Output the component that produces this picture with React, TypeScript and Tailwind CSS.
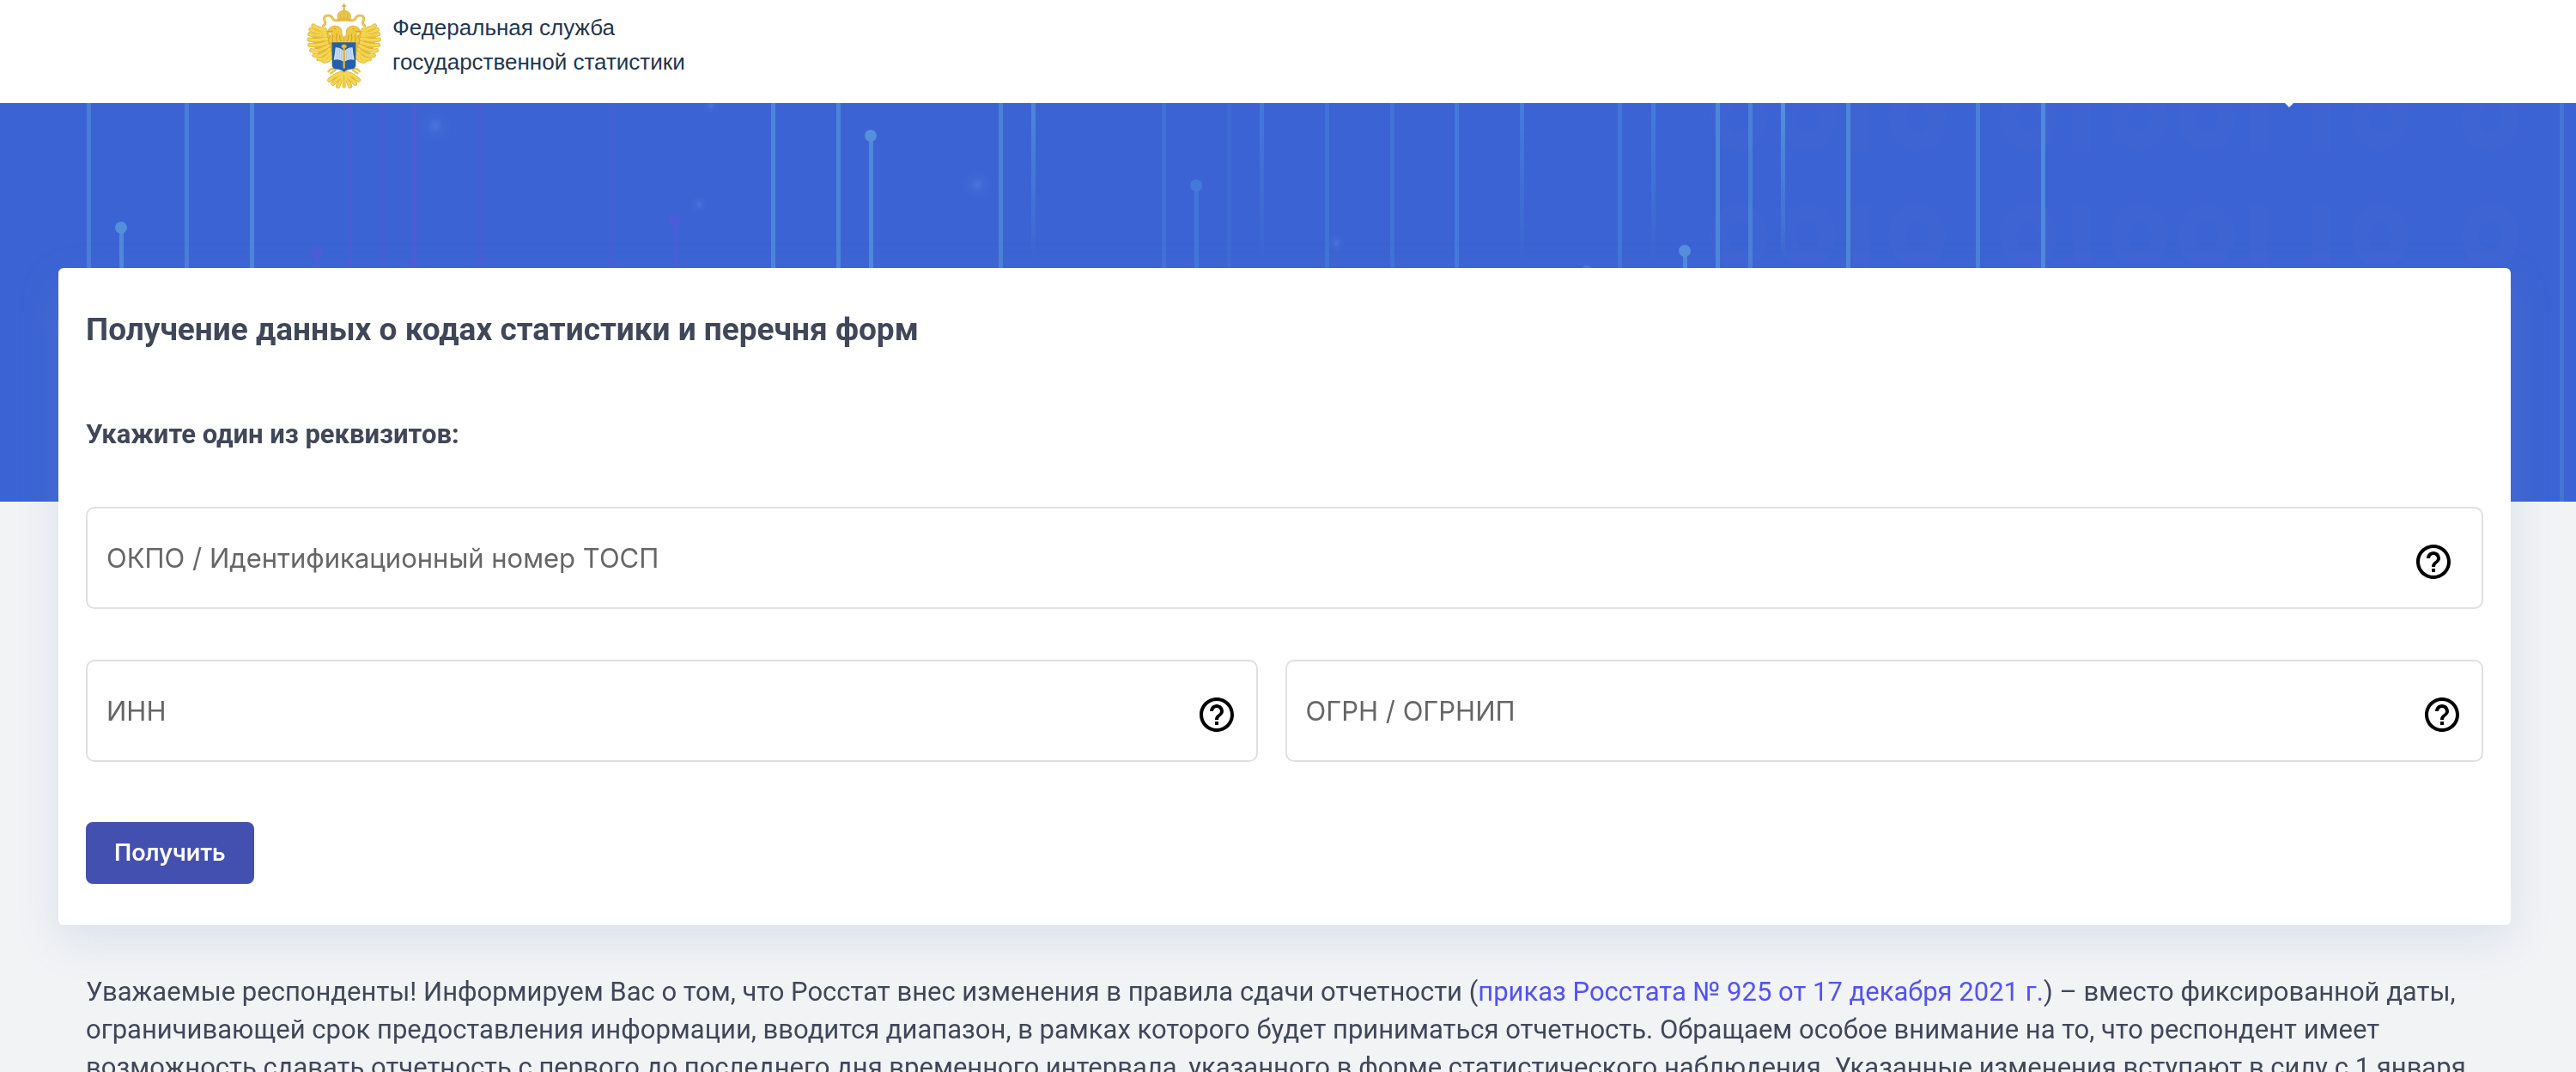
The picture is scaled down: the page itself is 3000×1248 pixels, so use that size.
import React from "react";
import { MdHelpOutline } from "react-icons/md";

// light lines of the banner, "fade" is where the line dissolves
const lines = [
  { x: 103, color: "#5596dd", o: 0.55 },
  { x: 217, color: "#5596dd", o: 0.55 },
  { x: 293, color: "#5596dd", o: 0.7 },
  { x: 407, color: "#5558d8", o: 0.5 },
  { x: 445, color: "#5558d8", o: 0.35 },
  { x: 482, color: "#5558d8", o: 0.6 },
  { x: 559, color: "#5558d8", o: 0.4 },
  { x: 711, color: "#5558d8", o: 0.35 },
  { x: 900, color: "#5596dd", o: 0.65 },
  { x: 976, color: "#5596dd", o: 0.65 },
  { x: 1165, color: "#5596dd", o: 0.6 },
  { x: 1203, color: "#5596dd", o: 0.7, fade: true },
  { x: 1355, color: "#457fdd", o: 0.5 },
  { x: 1431, color: "#457fdd", o: 0.25 },
  { x: 1469, color: "#457fdd", o: 0.8, fade: true },
  { x: 1545, color: "#457fdd", o: 0.6 },
  { x: 1621, color: "#457fdd", o: 0.5 },
  { x: 1696, color: "#457fdd", o: 0.8 },
  { x: 1772, color: "#457fdd", o: 0.9, fade: true },
  { x: 1886, color: "#457fdd", o: 0.7 },
  { x: 1925, color: "#457fdd", o: 0.9, fade: true },
  { x: 2000, color: "#5596dd", o: 0.7 },
  { x: 2038, color: "#5596dd", o: 0.55 },
  { x: 2076, color: "#5596dd", o: 0.9, fade: true },
  { x: 2152, color: "#5596dd", o: 0.7 },
  { x: 2303, color: "#5596dd", o: 0.6 },
  { x: 2379, color: "#5596dd", o: 0.75 },
  { x: 2983, color: "#5596dd", o: 0.35 },
];

const dots = [
  { x: 141, y: 145, color: "#548fdc" },
  { x: 369, y: 174, color: "#4a5dd8" },
  { x: 786, y: 137, color: "#4a5dd8" },
  { x: 1014, y: 38, color: "#548fdc" },
  { x: 1393, y: 96, color: "#427ada" },
  { x: 1848, y: 196, color: "#427ada" },
  { x: 1962, y: 172, color: "#548fdc" },
];

const glows = [
  { x: 507, y: 26, r: 22 },
  { x: 828, y: 3, r: 12 },
  { x: 814, y: 118, r: 12 },
  { x: 1138, y: 95, r: 20 },
  { x: 1556, y: 163, r: 12 },
];

const zeros = [2025, 2105, 2233, 2362, 2492, 2570, 2772, 2900];
const ones = [2156, 2413, 2619, 2692];

// feathers of one wing, from the shoulder to the tip
const feathers = [
  "M116 104 Q90 100 76 90",
  "M118 114 Q86 114 67 103",
  "M120 124 Q84 128 63 119",
  "M122 136 Q86 144 61 138",
  "M124 148 Q90 162 63 157",
  "M128 160 Q94 182 69 176",
  "M132 172 Q102 200 79 193",
  "M136 184 Q112 212 94 206",
  "M140 196 Q126 216 112 213",
];

function HalfEagle() {
  return (
    <g>
      <path d="M112 96 Q76 100 72 130 Q72 176 110 200 L150 210 L150 140 Z" fill="#e9c13b" />
      {feathers.map((d) => (
        <path key={d} d={d} stroke="#dcae34" strokeWidth="15" />
      ))}
      {feathers.map((d) => (
        <path key={d} d={d} stroke="#f5d650" strokeWidth="11" />
      ))}
      <path
        d="M108 112 Q90 112 78 104 M110 126 Q90 130 74 124 M112 142 Q92 150 74 146 M118 158 Q100 172 82 170 M126 174 Q110 190 94 190"
        stroke="#dfb63c"
        strokeWidth="2"
      />
      {/* ribbon */}
      <path
        d="M166 70 Q148 76 142 62 Q134 50 118 56 Q110 66 117 76 Q120 86 110 90"
        stroke="#d2a23a"
        strokeWidth="8"
      />
      <path
        d="M166 70 Q148 76 142 62 Q134 50 118 56 Q110 66 117 76 Q120 86 110 90"
        stroke="#f0cf52"
        strokeWidth="5"
      />
      {/* neck and head */}
      <path
        d="M182 150 L130 150 Q126 130 142 116 L124 113 Q128 94 150 90 Q172 92 175 108 Q172 122 182 130 Z"
        fill="#f0c940"
        stroke="#d0a034"
        strokeWidth="2"
      />
      <path
        d="M126 110 L144 108 M144 124 Q140 134 144 144 M158 118 Q152 132 158 144 M168 124 Q166 134 172 144"
        stroke="#cd9c30"
        strokeWidth="3"
      />
      <circle cx="151" cy="101" r="2" fill="#a67820" />
      {/* leg and tail */}
      <path d="M148 240 Q134 240 128 250 M152 246 L136 256" stroke="#ecc544" strokeWidth="7" />
      <path
        d="M172 256 Q150 262 132 280 M174 260 Q158 276 144 292 M178 262 Q170 282 162 301"
        stroke="#d9aa34"
        strokeWidth="15"
      />
      <path
        d="M172 256 Q150 262 132 280 M174 260 Q158 276 144 292 M178 262 Q170 282 162 301"
        stroke="#f5d650"
        strokeWidth="11"
      />
      <path d="M164 268 Q148 274 138 284 M172 274 Q162 286 156 296" stroke="#dcb03a" strokeWidth="2" />
    </g>
  );
}

function Emblem() {
  return (
    <svg
      viewBox="46 0 276 312"
      className="h-[104px] w-[92px] shrink-0"
      fill="none"
      strokeLinecap="round"
      aria-hidden="true"
    >
      <HalfEagle />
      <g transform="translate(366 0) scale(-1 1)">
        <HalfEagle />
      </g>
      <path d="M183 256 V302" stroke="#f5d650" strokeWidth="14" />
      <path d="M183 264 V304" stroke="#d5a834" strokeWidth="2" />
      {/* crown */}
      <path d="M183 14 V36 M177 21 H189" stroke="#d9ac3c" strokeWidth="5" />
      <path
        d="M163 72 Q154 50 168 42 Q183 32 198 42 Q212 50 203 72 Z"
        fill="#efc945"
        stroke="#cf9d38"
        strokeWidth="2"
      />
      <path
        d="M164 66 H202 M183 38 V62 M172 46 Q168 54 172 64 M194 46 Q198 54 194 64"
        stroke="#cf9d38"
        strokeWidth="2"
      />
      {/* shield */}
      <path
        d="M142 149 H223 V228 Q223 240 208 241 Q192 242 183 251 Q174 242 157 241 Q142 240 142 228 Z"
        fill="#2460a8"
        stroke="#2f5f8e"
        strokeWidth="2"
      />
      <path d="M153 166 Q168 164 181 178 V215 Q168 204 147 209 Q151 190 153 166 Z" fill="#c9dcf0" />
      <path d="M213 166 Q198 164 185 178 V215 Q198 204 219 209 Q215 190 213 166 Z" fill="#c9dcf0" />
      <path
        d="M160 170 L157 204 M167 172 V206 M174 177 V210 M206 170 L209 204 M199 172 V206 M192 177 V210"
        stroke="#9dbde0"
        strokeWidth="2"
      />
      <path d="M183 168 V236" stroke="#dcb640" strokeWidth="7" />
      <ellipse cx="183" cy="162" rx="9" ry="7" fill="#e6c044" stroke="#b08c2c" strokeWidth="2" />
    </svg>
  );
}

function BannerPattern() {
  return (
    <svg
      viewBox="0 0 3000 464"
      preserveAspectRatio="xMidYMin slice"
      className="h-full w-full"
      aria-hidden="true"
    >
      <defs>
        <linearGradient id="fade" x1="0" y1="0" x2="0" y2="1">
          <stop offset="0" stopColor="#fff" />
          <stop offset="0.3" stopColor="#fff" stopOpacity="0.3" />
          <stop offset="0.4" stopColor="#fff" stopOpacity="0" />
        </linearGradient>
        <mask id="fadeMask" maskUnits="userSpaceOnUse" x="0" y="0" width="3000" height="464">
          <rect width="3000" height="464" fill="url(#fade)" />
        </mask>
        <radialGradient id="glow">
          <stop offset="0" stopColor="#5580e6" stopOpacity="0.6" />
          <stop offset="0.4" stopColor="#5580e6" stopOpacity="0.15" />
          <stop offset="1" stopColor="#5580e6" stopOpacity="0" />
        </radialGradient>
      </defs>
      <g stroke="#4468d6" strokeWidth="20" strokeOpacity="0.35" fill="none">
        {zeros.map((x) => (
          <React.Fragment key={x}>
            <ellipse cx={x} cy="18" rx="23" ry="28" />
            <ellipse cx={x} cy="155" rx="23" ry="28" />
          </React.Fragment>
        ))}
        {ones.map((x) => (
          <path key={x} d={`M${x + 11} 0 V56 M${x + 11} 119 V192`} />
        ))}
      </g>
      <g mask="url(#fadeMask)">
        {lines
          .filter((line) => line.fade)
          .map((line) => (
            <rect key={line.x} x={line.x - 2} width="5" height="464" fill={line.color} opacity={line.o} />
          ))}
      </g>
      {lines
        .filter((line) => !line.fade)
        .map((line) => (
          <rect key={line.x} x={line.x - 2} width="5" height="464" fill={line.color} opacity={line.o} />
        ))}
      {dots.map((dot) => (
        <g key={dot.x} fill={dot.color}>
          <rect x={dot.x - 2} y={dot.y} width="5" height={464 - dot.y} opacity="0.85" />
          <circle cx={dot.x} cy={dot.y} r="7" />
        </g>
      ))}
      {glows.map((glow) => (
        <circle key={glow.x} cx={glow.x} cy={glow.y} r={glow.r} fill="url(#glow)" />
      ))}
      <path d="M2661 0 H2671 L2666 5 Z" fill="#fff" />
    </svg>
  );
}

type FieldProps = {
  id: string;
  label: string;
  className: string;
};

function Field({ id, label, className }: FieldProps) {
  return (
    <div
      className={`flex h-[119px] items-center rounded-[10px] border-2 border-[#e0e0e0] pl-[22px] ${className}`}
    >
      <label htmlFor={id} className="cursor-text text-[31px] leading-10 text-[#666666]">
        {label}
      </label>
      <input id={id} type="text" className="h-full min-w-0 flex-1 px-4 text-[31px] outline-none" />
      <button type="button" aria-label="Подсказка" className="mt-2 text-black">
        <MdHelpOutline size={48} />
      </button>
    </div>
  );
}

export default function App() {
  return (
    <div className="h-screen overflow-hidden bg-[#f1f3f5] font-['Inter',sans-serif] text-[#404759]">
      <header className="flex h-[120px] items-start gap-2.5 bg-white pl-[355px]">
        <Emblem />
        <p className="pt-3 font-['Liberation_Sans',sans-serif] text-[26px] leading-10 text-[#1f3550]">
          Федеральная служба
          <br />
          государственной статистики
        </p>
      </header>
      <section className="h-[464px] bg-[#3b63d3]">
        <BannerPattern />
      </section>
      <main className="relative -mt-[272px] pr-[76px] pl-[68px]">
        <form
          className="rounded-md bg-white px-8 pt-12 pb-12 shadow-[0_16px_48px_rgba(128,156,205,0.2)]"
          onSubmit={(e) => e.preventDefault()}
        >
          <h1 className="font-['Roboto',sans-serif] text-[37px] leading-[48px] font-bold">
            Получение данных о кодах статистики и перечня форм
          </h1>
          <h2 className="mt-[78px] font-['Roboto',sans-serif] text-[31px] leading-10 font-bold">
            Укажите один из реквизитов:
          </h2>
          <div className="mt-16 flex flex-wrap gap-x-8 gap-y-[59px]">
            <Field id="okpo" label="ОКПО / Идентификационный номер ТОСП" className="w-full pr-8" />
            <Field id="inn" label="ИНН" className="flex-[1364] pr-[22px]" />
            <Field id="ogrn" label="ОГРН / ОГРНИП" className="flex-[1396] pr-[22px]" />
          </div>
          <button
            type="submit"
            className="mt-[70px] block h-[72px] rounded-lg bg-[#4450b0] px-[33px] text-[27px] leading-8 font-semibold text-white"
          >
            Получить
          </button>
        </form>
        <p className="mt-14 px-8 font-['Roboto',sans-serif] text-[31px] leading-[44px]">
          Уважаемые респонденты! Информируем Вас о том, что Росстат внес изменения в правила сдачи
          отчетности (
          <a href="#order" className="text-[#5352f6]">
            приказ Росстата № 925 от 17 декабря 2021 г.
          </a>
          ) – вместо фиксированной даты,
          <br />
          ограничивающей срок предоставления информации, вводится диапазон, в рамках которого будет
          приниматься отчетность. Обращаем особое внимание на то, что респондент имеет
          <br />
          возможность сдавать отчетность с первого до последнего дня временного интервала, указанного
          в форме статистического наблюдения. Указанные изменения вступают в силу с 1 января
        </p>
      </main>
    </div>
  );
}
